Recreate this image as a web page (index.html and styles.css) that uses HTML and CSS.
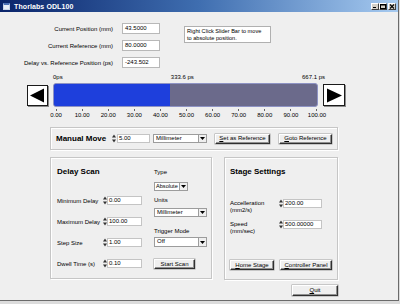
FILE: index.html
```html
<!DOCTYPE html>
<html lang="en">
<head>
    <meta charset="UTF-8">
    <meta name="viewport" content="width=device-width, initial-scale=1.0">
    <title>Thorlabs ODL100</title>
    <link rel="stylesheet" href="styles.css">
</head>
<body>
<div class="window">
    <div class="titlebar">
        <span class="app-icon"></span>
        <span class="title">Thorlabs ODL100</span>
        <div class="caption-btns">
            <span class="cap-btn"><svg width="6" height="5" viewBox="0 0 6 5"><rect x="1" y="3" width="3" height="1" fill="#000"/></svg></span>
            <span class="cap-btn"><svg width="6" height="5" viewBox="0 0 6 5"><rect x="0.5" y="0.5" width="5" height="4" fill="none" stroke="#000"/><rect x="0" y="0" width="6" height="1.5" fill="#000"/></svg></span>
            <span class="cap-btn close"><svg width="6" height="5" viewBox="0 0 6 5"><path d="M1 0.5 L5 4.5 M5 0.5 L1 4.5" stroke="#000" stroke-width="1.1"/></svg></span>
        </div>
    </div>

    <div class="client">
        <div class="top">
            <div class="readouts">
                <label>Current Position (mm)</label>
                <div class="field">43.5000</div>
                <label>Current Reference (mm)</label>
                <div class="field">80.0000</div>
                <label>Delay vs. Reference Position (ps)</label>
                <div class="field">-243.502</div>
            </div>
            <div class="hint">Right Click Slider Bar to move<br>to absolute position.</div>
        </div>

        <div class="scale-labels">
            <span>0ps</span>
            <span>333.6 ps</span>
            <span>667.1 ps</span>
        </div>

        <div class="slider-row">
            <button class="arrow-btn">
                <svg width="19" height="19" viewBox="0 0 19 19"><polygon points="2,9.5 16,2.5 16,16.5" fill="#000"/></svg>
            </button>
            <div class="track"><div class="fill" style="width: 44%"></div></div>
            <button class="arrow-btn">
                <svg width="20" height="19" viewBox="0 0 20 19"><polygon points="3,2.5 18,9.5 3,16.5" fill="#000"/></svg>
            </button>
        </div>

        <div class="ticks">
            <div class="tick"><span>0.00</span></div>
            <div class="tick"><span>10.00</span></div>
            <div class="tick"><span>20.00</span></div>
            <div class="tick"><span>30.00</span></div>
            <div class="tick"><span>40.00</span></div>
            <div class="tick"><span>50.00</span></div>
            <div class="tick"><span>60.00</span></div>
            <div class="tick"><span>70.00</span></div>
            <div class="tick"><span>80.00</span></div>
            <div class="tick"><span>90.00</span></div>
            <div class="tick"><span>100.00</span></div>
        </div>

        <div class="group manual">
            <span class="group-title manual-title">Manual Move</span>
            <div class="spin-field">
                <span class="spin"><svg width="4" height="9" viewBox="0 0 4 9"><polygon points="0,3.5 2,0.5 4,3.5" fill="#333"/><polygon points="0,5.5 4,5.5 2,8.5" fill="#333"/></svg></span>
                <div class="num w33">5.00</div>
            </div>
            <div class="combo w54">
                <span class="combo-text">Millimeter</span>
                <span class="combo-arrow"><svg width="5" height="3" viewBox="0 0 5 3"><polygon points="0,0 5,0 2.5,3" fill="#000"/></svg></span>
            </div>
            <button class="btn set-ref"><u>S</u>et as Reference</button>
            <button class="btn goto-ref"><u>G</u>oto Reference</button>
        </div>

        <div class="lower">
            <div class="group delay">
                <div class="delay-left">
                    <div class="group-title">Delay Scan</div>
                    <div class="param first">
                        <span class="param-label">Minimum Delay</span>
                        <span class="spin"><svg width="4" height="9" viewBox="0 0 4 9"><polygon points="0,3.5 2,0.5 4,3.5" fill="#333"/><polygon points="0,5.5 4,5.5 2,8.5" fill="#333"/></svg></span>
                        <div class="num w35">0.00</div>
                    </div>
                    <div class="param">
                        <span class="param-label">Maximum Delay</span>
                        <span class="spin"><svg width="4" height="9" viewBox="0 0 4 9"><polygon points="0,3.5 2,0.5 4,3.5" fill="#333"/><polygon points="0,5.5 4,5.5 2,8.5" fill="#333"/></svg></span>
                        <div class="num w35">100.00</div>
                    </div>
                    <div class="param">
                        <span class="param-label">Step Size</span>
                        <span class="spin"><svg width="4" height="9" viewBox="0 0 4 9"><polygon points="0,3.5 2,0.5 4,3.5" fill="#333"/><polygon points="0,5.5 4,5.5 2,8.5" fill="#333"/></svg></span>
                        <div class="num w35">1.00</div>
                    </div>
                    <div class="param">
                        <span class="param-label">Dwell Time (s)</span>
                        <span class="spin"><svg width="4" height="9" viewBox="0 0 4 9"><polygon points="0,3.5 2,0.5 4,3.5" fill="#333"/><polygon points="0,5.5 4,5.5 2,8.5" fill="#333"/></svg></span>
                        <div class="num w35">0.10</div>
                    </div>
                </div>
                <div class="delay-right">
                    <span class="small-label type-label">Type</span>
                    <div class="combo w34 type-combo">
                        <span class="combo-text">Absolute</span>
                        <span class="combo-arrow"><svg width="5" height="3" viewBox="0 0 5 3"><polygon points="0,0 5,0 2.5,3" fill="#000"/></svg></span>
                    </div>
                    <span class="small-label units-label">Units</span>
                    <div class="combo w53 units-combo">
                        <span class="combo-text">Millimeter</span>
                        <span class="combo-arrow"><svg width="5" height="3" viewBox="0 0 5 3"><polygon points="0,0 5,0 2.5,3" fill="#000"/></svg></span>
                    </div>
                    <span class="small-label trigger-label">Trigger Mode</span>
                    <div class="combo w53 trigger-combo">
                        <span class="combo-text">Off</span>
                        <span class="combo-arrow"><svg width="5" height="3" viewBox="0 0 5 3"><polygon points="0,0 5,0 2.5,3" fill="#000"/></svg></span>
                    </div>
                    <button class="btn start-scan">Start Scan</button>
                </div>
            </div>

            <div class="group stage">
                <div class="group-title">Stage Settings</div>
                <div class="stage-row accel">
                    <span class="stage-label">Accelleration<br>(mm2/s)</span>
                    <span class="spin"><svg width="4" height="9" viewBox="0 0 4 9"><polygon points="0,3.5 2,0.5 4,3.5" fill="#333"/><polygon points="0,5.5 4,5.5 2,8.5" fill="#333"/></svg></span>
                    <div class="num w39">200.00</div>
                </div>
                <div class="stage-row speed">
                    <span class="stage-label">Speed<br>(mm/sec)</span>
                    <span class="spin"><svg width="4" height="9" viewBox="0 0 4 9"><polygon points="0,3.5 2,0.5 4,3.5" fill="#333"/><polygon points="0,5.5 4,5.5 2,8.5" fill="#333"/></svg></span>
                    <div class="num w39">500.00000</div>
                </div>
                <div class="stage-buttons">
                    <button class="btn home"><u>H</u>ome Stage</button>
                    <button class="btn panel"><u>C</u>ontroller Panel</button>
                </div>
            </div>
        </div>

        <div class="footer">
            <button class="btn quit"><u>Q</u>uit</button>
        </div>
    </div>
</div>
</body>
</html>
```

FILE: styles.css
```css
* {
    box-sizing: border-box;
}

body {
    margin: 0;
    background: #dcdcdc;
    font-family: "Liberation Sans", Arial, sans-serif;
    font-size: 6px;
    color: #000;
}

.window {
    width: 399px;
    height: 301px;
    background: #efefef;
    border-right: 1px solid #6b6b6b;
    border-bottom: 1px solid #6b6b6b;
    display: flex;
    flex-direction: column;
}

/* title bar */
.titlebar {
    height: 12px;
    flex: none;
    background: linear-gradient(90deg, #0a246a 0%, #3f6eb0 50%, #a6caf0 100%);
    display: flex;
    align-items: center;
    padding: 0 2px 0 3px;
}

.app-icon {
    width: 7px;
    height: 7px;
    background: #e8eef8;
    border: 1px solid #c8d4e8;
    border-top: 2px solid #4a6fb5;
    margin-right: 4px;
}

.title {
    flex: 1;
    color: #fff;
    font-weight: bold;
    font-size: 7px;
    letter-spacing: 0.1px;
}

.caption-btns {
    display: flex;
}

.cap-btn {
    width: 8px;
    height: 7px;
    background: #d4d0c8;
    border: 1px solid;
    border-color: #fff #404040 #404040 #fff;
    display: flex;
    align-items: center;
    justify-content: center;
}

.cap-btn svg {
    display: block;
}

.cap-btn.close {
    margin-left: 1px;
}

.client {
    flex: 1;
    padding-top: 11px;
}

/* read-outs at top */
.top {
    display: flex;
}

.readouts {
    display: grid;
    grid-template-columns: 113px 38px;
    grid-auto-rows: 11px;
    column-gap: 9px;
    row-gap: 6px;
    align-items: center;
}

.readouts label {
    text-align: right;
    white-space: nowrap;
}

.field {
    height: 11px;
    background: #fff;
    border: 1px solid #b8b8b8;
    padding-left: 2px;
    line-height: 9px;
}

.hint {
    margin: 3px 0 0 24px;
    width: 87px;
    height: 17px;
    background: #fff;
    border: 1px solid #b0b0b0;
    padding: 1px 2px;
    line-height: 7px;
    white-space: nowrap;
    font-size: 5.6px;
}

/* slider */
.scale-labels {
    margin: 5px 0 0 53px;
    width: 272px;
    display: flex;
    justify-content: space-between;
    line-height: 8px;
}

.slider-row {
    display: flex;
    align-items: center;
    height: 24px;
    margin-top: 2px;
    padding-left: 27px;
}

.arrow-btn {
    width: 21px;
    height: 21px;
    padding: 0;
    background: #fff;
    border: 1px solid #1a1a1a;
    box-shadow: 1px 1px 0 #8a8a8a;
    display: flex;
    align-items: center;
    justify-content: center;
}

.arrow-btn + .track + .arrow-btn {
    width: 22px;
    height: 22px;
}

.track {
    width: 265px;
    height: 24px;
    margin: 0 5px;
    background: #6b6a8b;
    border: 1px solid #8e93c4;
    border-radius: 3px;
    overflow: hidden;
}

.fill {
    height: 100%;
    background: #1e3fdc;
}

.ticks {
    display: grid;
    grid-template-columns: repeat(11, 26.1px);
    margin: 2px 0 0 43px;
}

.tick {
    display: flex;
    flex-direction: column;
    align-items: center;
}

.tick::before {
    content: "";
    width: 1px;
    height: 2px;
    background: #666;
    margin-bottom: 1px;
}

.tick span {
    line-height: 7px;
}

/* group boxes */
.group {
    border: 1px solid #c6c6c6;
    box-shadow: inset 1px 1px 0 #fff, 1px 1px 0 #fff;
}

.group-title {
    font-size: 8px;
    font-weight: bold;
    line-height: 8px;
    white-space: nowrap;
}

.manual {
    margin: 8px 0 0 50px;
    width: 288px;
    height: 23px;
    display: flex;
    align-items: center;
    padding-left: 5px;
}

.manual-title {
    width: 50px;
    margin-right: 6px;
}

.spin-field {
    display: flex;
    align-items: center;
}

.spin {
    width: 4px;
    height: 9px;
    flex: none;
}

.spin svg {
    display: block;
}

.num {
    height: 9px;
    background: #fff;
    border: 1px solid #c4c4c4;
    padding-left: 1px;
    line-height: 7px;
    white-space: nowrap;
}

.w33 { width: 33px; margin-left: 1px; }
.w35 { width: 35px; }
.w39 { width: 39px; }
.w34 { width: 34px; }
.w53 { width: 53px; }
.w54 { width: 54px; }

.combo {
    height: 9px;
    background: #fff;
    border: 1px solid #9c9c9c;
    display: flex;
    align-items: stretch;
}

.manual .combo {
    margin-left: 3px;
}

.combo-text {
    flex: 1;
    min-width: 0;
    padding-left: 2px;
    line-height: 7px;
    white-space: nowrap;
    overflow: hidden;
}

.combo-arrow {
    width: 8px;
    flex: none;
    background: #efefef;
    border-left: 1px solid #9c9c9c;
    display: flex;
    align-items: center;
    justify-content: center;
}

.combo-arrow svg {
    display: block;
}

.btn {
    height: 10px;
    padding: 0;
    background: #efefef;
    border: 1px solid;
    border-color: #fff #303030 #303030 #fff;
    box-shadow: inset -1px -1px 0 #909090, 0 0 0 0.5px #a0a0a0;
    font-family: inherit;
    font-size: 6px;
    line-height: 7px;
    color: #000;
    white-space: nowrap;
}

.set-ref {
    width: 55px;
    margin-left: 8px;
}

.goto-ref {
    width: 53px;
    margin-left: 9px;
}

/* lower panels */
.lower {
    display: flex;
    gap: 12px;
    margin: 7px 0 0 50px;
}

.delay {
    width: 162px;
    height: 122px;
    display: flex;
    padding: 10px 0 0 6px;
}

.delay-left {
    width: 97px;
}

.param {
    display: flex;
    align-items: center;
    height: 9px;
    margin-top: 12px;
}

.param.first {
    margin-top: 20px;
}

.param-label {
    width: 46px;
    white-space: nowrap;
}

.delay-right {
    display: flex;
    flex-direction: column;
    align-items: flex-start;
}

.small-label {
    line-height: 7px;
}

.type-label { margin-top: 1px; }
.type-combo { margin-top: 6px; }
.units-label { margin-top: 6px; }
.units-combo { margin-top: 4px; }
.trigger-label { margin-top: 11px; }
.trigger-combo { margin-top: 2px; height: 10px; }

.type-combo .combo-text {
    font-size: 5.6px;
    padding-left: 1px;
}

.start-scan {
    width: 41px;
    margin-top: 12px;
}

.stage {
    width: 114px;
    height: 123px;
    padding: 10px 0 0 5px;
}

.stage-row {
    display: flex;
    align-items: flex-start;
}

.stage-row.accel {
    margin-top: 23px;
}

.stage-row.speed {
    margin-top: 7px;
}

.stage-label {
    width: 49px;
    line-height: 6.5px;
    padding-top: 1px;
}

.stage-buttons {
    display: flex;
    gap: 6px;
    margin-top: 26px;
}

.home {
    width: 44px;
}

.panel {
    width: 52px;
}

.footer {
    margin-top: 5px;
    padding-left: 292px;
}

.quit {
    width: 46px;
    height: 11px;
}
```
